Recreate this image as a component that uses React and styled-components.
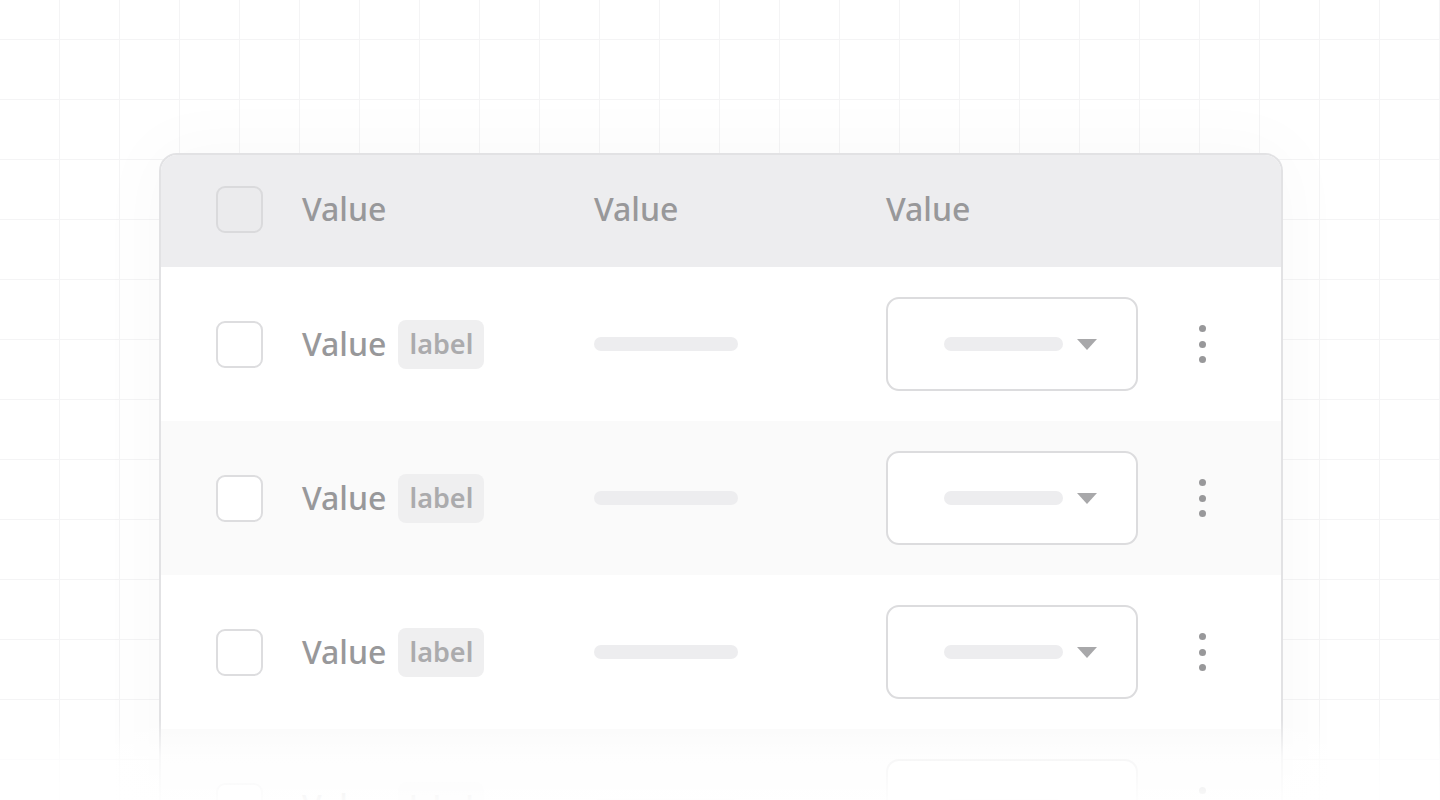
import React from "react";
import styled, { createGlobalStyle } from "styled-components";

const GlobalStyle = createGlobalStyle`
  html, body {
    margin: 0;
    padding: 0;
    background: #ffffff;
  }
  body {
    font-family: "Noto Sans", "Open Sans", sans-serif;
  }
`;

const Page = styled.div`
  position: relative;
  width: 1440px;
  height: 800px;
  overflow: hidden;
  background-color: #ffffff;
  background-image:
    linear-gradient(to right, #f4f4f5 1.5px, transparent 1.5px),
    linear-gradient(to bottom, #f4f4f5 1.5px, transparent 1.5px);
  background-size: 60px 60px;
  background-position: -1px 39px;
  padding-top: 153px;
  box-sizing: border-box;
`;

const Card = styled.div`
  width: 1124px;
  margin: 0 auto 0 159px;
  box-sizing: border-box;
  border: 2px solid #e2e2e4;
  border-radius: 18px;
  overflow: hidden;
  background: #ffffff;
  box-shadow: 0 0 70px 10px rgba(0, 0, 0, 0.022);
`;

const Row = styled.div`
  display: grid;
  grid-template-columns: 86px 292px 292px 252px 128px;
  align-items: center;
  box-sizing: border-box;
  height: ${(p) => (p.$header ? "112px" : "154px")};
  padding-left: 55px;
  padding-bottom: ${(p) => (p.$header ? "4px" : "0")};
  background: ${(p) => (p.$header ? "#ededef" : p.$alt ? "#fafafa" : "#ffffff")};
`;

const Check = styled.div`
  width: 47px;
  height: 47px;
  box-sizing: border-box;
  border: 2px solid ${(p) => (p.$filled ? "#dadadc" : "#dddddf")};
  border-radius: 9px;
  background: ${(p) => (p.$filled ? "#ebebed" : "#ffffff")};
`;

const HeadText = styled.span`
  font-size: 32px;
  font-weight: 500;
  color: #98989a;
  line-height: 1;
`;

const NameCell = styled.div`
  display: flex;
  align-items: center;
  gap: 12px;
`;

const Value = styled.span`
  font-size: 32px;
  font-weight: 500;
  color: #98989a;
  line-height: 1;
`;

const Chip = styled.span`
  display: inline-flex;
  align-items: center;
  justify-content: center;
  width: 86px;
  height: 49px;
  box-sizing: border-box;
  border-radius: 8px;
  background: #efeff0;
  font-size: 27px;
  font-weight: 600;
  color: #ababad;
  padding-bottom: 2px;
`;

const Bar = styled.div`
  width: ${(p) => p.$w}px;
  height: 14px;
  border-radius: 7px;
  background: #ededef;
`;

const Select = styled.div`
  width: 252px;
  height: 94px;
  box-sizing: border-box;
  border: 2px solid #dcdcde;
  border-radius: 13px;
  background: #ffffff;
  display: flex;
  align-items: center;
  padding-left: 56px;
  gap: 14px;
`;

const Caret = styled.svg`
  width: 20px;
  height: 11px;
  display: block;
`;

const Dots = styled.div`
  display: flex;
  flex-direction: column;
  align-items: center;
  gap: 8.5px;
  & > span {
    width: 7px;
    height: 7px;
    border-radius: 50%;
    background: #98989a;
  }
`;

const Fade = styled.div`
  position: absolute;
  left: 0;
  right: 0;
  bottom: 0;
  height: 80px;
  background: linear-gradient(to bottom, rgba(255, 255, 255, 0) 0%, rgba(255, 255, 255, 0.75) 45%, rgba(255, 255, 255, 0.95) 100%);
  pointer-events: none;
`;

const rows = [0, 1, 2, 3];

export default function App() {
  return (
    <>
      <GlobalStyle />
      <Page>
        <Card>
          <Row $header>
            <Check $filled />
            <HeadText>Value</HeadText>
            <HeadText>Value</HeadText>
            <HeadText>Value</HeadText>
            <div />
          </Row>
          {rows.map((i) => (
            <Row key={i} $alt={i % 2 === 1}>
              <Check />
              <NameCell>
                <Value>Value</Value>
                <Chip>label</Chip>
              </NameCell>
              <Bar $w={144} />
              <Select>
                <Bar $w={119} />
                <Caret viewBox="0 0 20 11">
                  <path d="M0 0 H20 L10 11 Z" fill="#a8a8aa" />
                </Caret>
              </Select>
              <Dots>
                <span />
                <span />
                <span />
              </Dots>
            </Row>
          ))}
        </Card>
        <Fade />
      </Page>
    </>
  );
}
